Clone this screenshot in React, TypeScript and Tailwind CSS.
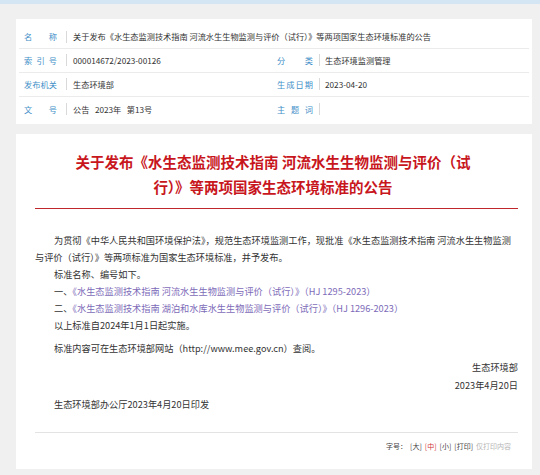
import React from "react";

const FONT = '"Noto Sans CJK SC", "Noto Sans", "Liberation Sans", sans-serif';

function Label({ children, w = "w-[33px]" }: { children: React.ReactNode; w?: string }) {
  return (
    <div className={`${w} shrink-0 text-[#3f8fc8] [text-align-last:justify] text-justify`}>{children}</div>
  );
}

function Sep() {
  return <div className="w-px h-[12px] bg-[#d9d9d9] shrink-0" />;
}

export default function App() {
  return (
    <div className="w-[540px] h-[475px] bg-[#f0f0f0] overflow-hidden" style={{ fontFamily: FONT }}>
      <div className="h-[4px] bg-[#d4e5f3]" />
      {/* info card */}
      <div className="ml-[16px] w-[516px] mt-[15px] bg-white pt-[6px] pb-[3px] px-[3px] text-[8.2px] text-[#333]">
        <div className="flex items-center h-[24px] border-b border-[#ebebeb] pl-[5px]">
          <Label>名称</Label>
          <div className="ml-[9px]"><Sep /></div>
          <div className="ml-[6px] whitespace-nowrap">关于发布《水生态监测技术指南 河流水生生物监测与评价（试行）》等两项国家生态环境标准的公告</div>
        </div>
        <div className="flex items-center h-[24px] border-b border-[#ebebeb] pl-[5px]">
          <div className="flex items-center w-[253px]">
            <Label>索引号</Label>
            <div className="ml-[9px]"><Sep /></div>
            <div className="ml-[6px]">000014672/2023-00126</div>
          </div>
          <div className="flex items-center">
            <Label w="w-[36px]">分类</Label>
            <div className="ml-[6px]"><Sep /></div>
            <div className="ml-[5px]">生态环境监测管理</div>
          </div>
        </div>
        <div className="flex items-center h-[24px] border-b border-[#ebebeb] pl-[5px]">
          <div className="flex items-center w-[253px]">
            <Label>发布机关</Label>
            <div className="ml-[9px]"><Sep /></div>
            <div className="ml-[6px]">生态环境部</div>
          </div>
          <div className="flex items-center">
            <Label w="w-[36px]">生成日期</Label>
            <div className="ml-[6px]"><Sep /></div>
            <div className="ml-[5px]">2023-04-20</div>
          </div>
        </div>
        <div className="flex items-center h-[24px] pl-[5px]">
          <div className="flex items-center w-[253px]">
            <Label>文号</Label>
            <div className="ml-[9px]"><Sep /></div>
            <div className="ml-[6px] whitespace-pre">公告   2023年   第13号</div>
          </div>
          <div className="flex items-center">
            <Label w="w-[36px]">主题词</Label>
            <div className="ml-[6px]"><Sep /></div>
          </div>
        </div>
      </div>

      {/* main card */}
      <div className="ml-[16px] w-[516px] mt-[10px] h-[335px] bg-white pl-[19px] pr-[14px] pt-[15px]">
        <div className="text-center text-[14.5px] font-bold leading-[25px] text-[#c8161d] pr-[7px]">
          <div className="whitespace-nowrap">关于发布《水生态监测技术指南 河流水生生物监测与评价（试</div>
          <div className="whitespace-nowrap">行）》等两项国家生态环境标准的公告</div>
        </div>
        <div className="mt-[9px] h-px bg-[#c0272d]" />
        <div className="mt-[23px] text-[9.2px] leading-[17px] text-[#333]">
          <div className="pl-[19px] whitespace-nowrap">为贯彻《中华人民共和国环境保护法》，规范生态环境监测工作，现批准《水生态监测技术指南 河流水生生物监测</div>
          <div className="whitespace-nowrap">与评价（试行）》等两项标准为国家生态环境标准，并予发布。</div>
          <div className="pl-[19px]">标准名称、编号如下。</div>
          <div className="pl-[19px] whitespace-nowrap">
            一、<span className="text-[#7d6bb9]">《水生态监测技术指南 河流水生生物监测与评价（试行）》（HJ 1295-2023）</span>
          </div>
          <div className="pl-[19px] whitespace-nowrap">
            二、<span className="text-[#7d6bb9]">《水生态监测技术指南 湖泊和水库水生生物监测与评价（试行）》（HJ 1296-2023）</span>
          </div>
          <div className="pl-[19px]">以上标准自2024年1月1日起实施。</div>
          <div className="pl-[19px] mt-[6px]">标准内容可在生态环境部网站（http://www.mee.gov.cn）查阅。</div>
          <div className="text-right mt-[1px] leading-[18px]">生态环境部</div>
          <div className="text-right leading-[18px]">2023年4月20日</div>
          <div className="pl-[19px] mt-[2px]">生态环境部办公厅2023年4月20日印发</div>
        </div>
        <div className="mt-[19px] h-px bg-[#e3e3e3]" />
        <div className="mt-[7px] flex justify-end pr-[7px] text-[7px] leading-[12px] text-[#444] gap-[3px] whitespace-nowrap">
          <span>字号：</span>
          <span>[大]</span>
          <span className="text-[#d0343b]">[中]</span>
          <span>[小]</span>
          <span>[打印]</span>
          <span className="text-[#b5b5b5]">仅打印内容</span>
        </div>
      </div>
    </div>
  );
}
